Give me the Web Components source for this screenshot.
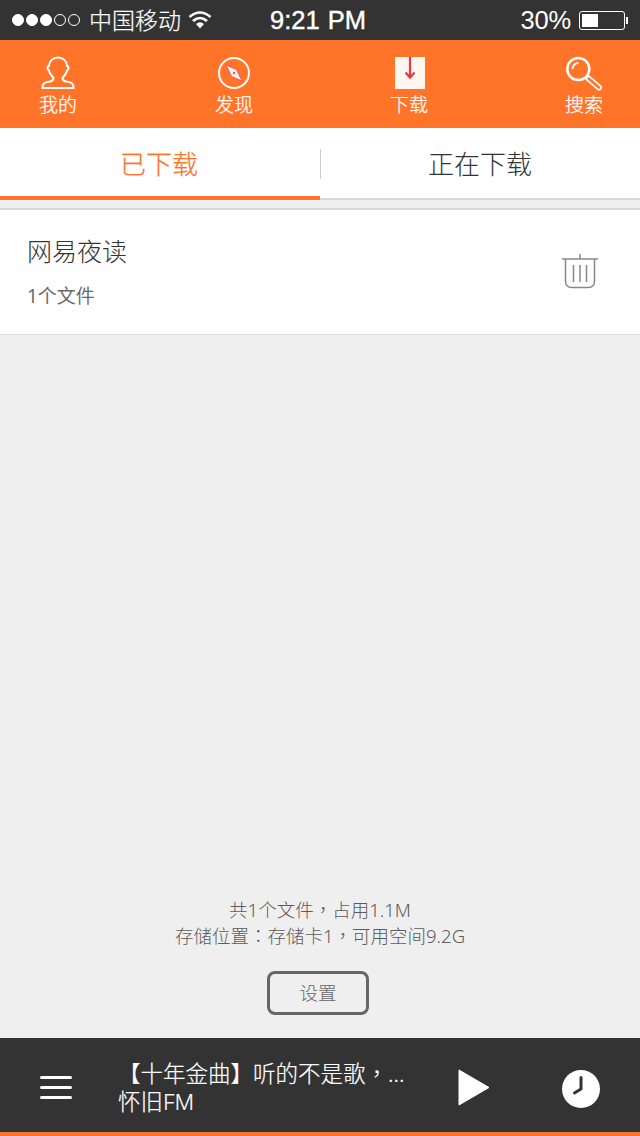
<!DOCTYPE html>
<html lang="zh-CN"><head><meta charset="utf-8"><title>下载</title>
<style>html,body{margin:0;padding:0;height:100%;background:#efefef}
body{font-family:"Noto Sans CJK SC","Noto Sans",sans-serif;overflow:hidden;font-weight:300}
app-shell{height:1136px}</style></head>
<body>
<template id="t-shell"><style>:host{display:flex;flex-direction:column;width:640px;height:1136px;background:#efefef}
.main{flex:1;min-height:0;display:flex;flex-direction:column}</style>
<status-bar></status-bar><top-nav></top-nav><tab-bar></tab-bar><download-item></download-item>
<div class="main"><storage-info></storage-info></div><player-bar></player-bar></template>

<template id="t-status"><style>:host{display:flex;align-items:center;height:40px;background:#333;color:#fff;padding:0 12px 0 12px;box-sizing:border-box;position:relative;font-family:"Liberation Sans",Arial,sans-serif;font-weight:400}
.dots{display:flex;gap:2px}.dots i{width:12px;height:12px;border-radius:50%;box-sizing:border-box;border:1px solid #fff}.dots i.f{background:#fff}
.car{font:300 23px/38px "Noto Sans CJK SC",sans-serif;margin-left:9px;align-self:flex-start;-webkit-text-stroke:.2px #fff}
svg.w{margin-left:7px}
.time{position:absolute;left:270px;top:0;font-size:25.5px;line-height:40px;-webkit-text-stroke:.4px #fff;word-spacing:1px}
.r{margin-left:auto;display:flex;align-items:center}.pct{font-size:25.5px;line-height:40px;margin-right:8px;letter-spacing:-.2px}
.bat{width:46px;height:19px;border:1px solid #fff;border-radius:3px;box-sizing:border-box;padding:2px;margin-right:0}.bat b{display:block;width:16px;height:13px;background:#fff}
.tip{width:2px;height:7px;background:#fff;margin-left:1px}</style>
<div class="dots"><i class="f"></i><i class="f"></i><i class="f"></i><i></i><i></i></div><span class="car">中国移动</span>
<svg class="w" width="24" height="20" viewBox="0 0 24 20"><path d="M1.500 7Q12-2 22.500 7M5 11Q12 5 19 11" fill="none" stroke="#fff" stroke-width="2.600"/><path d="M8 14Q12 10.500 16 14L12 18.500Z" fill="#fff"/></svg>
<span class="time">9:21 PM</span>
<div class="r"><span class="pct">30%</span><div class="bat"><b></b></div><div class="tip"></div></div></template>

<template id="t-nav"><style>:host{display:grid;grid-template-columns:repeat(4,1fr);height:88px;background:#ff7428;box-sizing:border-box}
.i{display:flex;flex-direction:column;align-items:center;color:#fff;font-size:19px;line-height:26px;padding-top:16px;box-sizing:border-box;height:88px;-webkit-text-stroke:.25px #fff}
.i svg{display:block;width:36px;height:34px;flex:none}.i span{display:block;margin-top:1px}
.a{transform:translateX(-22px)}.b{transform:translateX(-6px)}.c{transform:translateX(9px)}.d{transform:translateX(24px)}</style>
<div class="i a"><svg viewBox="0 0 36 34"><path d="M2.500 32H33.500C33.500 27 31 26 26 25.500C23.500 25 22.500 24 22.500 22C25 19 26.500 17 27 14.500C29 14 29 10 27 10C27 5 23 1.500 18 1.500C13 1.500 9 5 9 10C7 10 7 14 9 14.500C9.500 17 11 19 13.500 22C13.500 24 12.500 25 10 25.500C5 26 2.500 27 2.500 32Z" fill="none" stroke="#fff" stroke-width="2"/></svg><span>我的</span></div>
<div class="i b"><svg viewBox="0 0 36 34"><circle cx="18" cy="17" r="15" fill="none" stroke="#fff" stroke-width="2"/><path d="M10 9L20.500 13.500 26 25 15.500 20.500Z" fill="#fff3ef" stroke="#ee5560" stroke-width="1"/><circle cx="18" cy="17" r="1.200" fill="#ee5560"/></svg><span>发现</span></div>
<div class="i c"><svg viewBox="0 0 36 34"><rect x="4" y="1" width="30" height="32" fill="#fff6f2"/><path d="M19 1V21M14.500 16.500L19 21.500 23.500 16.500" fill="none" stroke="#e5383f" stroke-width="2.200"/></svg><span>下载</span></div>
<div class="i d"><svg viewBox="0 0 36 34" style="overflow:visible"><circle cx="12.300" cy="13" r="11" fill="none" stroke="#fff" stroke-width="2.500"/><path d="M6.500 13a6 6 0 0 1 6-6" fill="none" stroke="#fff" stroke-width="2"/><path d="M22.500 22.500L33 31.500" stroke="#fff" stroke-width="6" stroke-linecap="round"/><path d="M22.500 22.500L33 31.500" stroke="#ff7428" stroke-width="2.500" stroke-linecap="round"/></svg><span>搜索</span></div></template>

<template id="t-tabs"><style>:host{display:grid;grid-template-columns:1fr 1fr;height:72px;background:#fff;box-sizing:border-box;border-bottom:2px solid #d8d8d8}
.t{display:flex;align-items:center;justify-content:center;font-size:26px;color:#333;height:72px;box-sizing:border-box;padding-bottom:4px}
.on{color:#ff7428;border-bottom:4px solid #ff7428;padding-bottom:0;padding-right:2px;-webkit-text-stroke:.25px #ff7428}
.o{position:relative}.o::before{content:"";position:absolute;left:0;top:21px;width:1px;height:30px;background:#ccc}</style>
<div class="t on">已下载</div><div class="t o">正在下载</div></template>

<template id="t-item"><style>:host{display:flex;align-items:center;justify-content:space-between;margin-top:8px;border-top:2px solid #d8d8d8;border-bottom:1px solid #dcdcdc;background:#fff;height:127px;box-sizing:border-box;padding:0 41px 0 27px}
.n{font-size:25px;line-height:36px;color:#333}.s{font-size:19px;line-height:28px;color:#6a6a6a;margin-top:14px;font-family:"Noto Sans","Noto Sans CJK SC",sans-serif;font-weight:400}
.tx{margin-top:-2px}
svg{display:block;margin-top:-2px}</style>
<div class="tx"><div class="n">网易夜读</div><div class="s">1个文件</div></div>
<svg width="38" height="36" viewBox="0 0 38 36"><path d="M1 6H37M19 1V6M4.500 6V28Q4.500 34.500 11 34.500H27Q33.500 34.500 33.500 28V6M12.500 12V29M19 12V29M25.500 12V29" fill="none" stroke="#888" stroke-width="1.500"/></svg></template>

<template id="t-store"><style>:host{display:flex;flex-direction:column;align-items:center;margin-top:auto;padding-bottom:23px;color:#5c5c5c;font-size:18.500px;line-height:26px;font-family:"Noto Sans","Noto Sans CJK SC",sans-serif}
.b{margin-top:22px;width:102px;height:44px;border:3px solid #666;border-radius:8px;box-sizing:border-box;display:flex;align-items:center;justify-content:center;color:#666;transform:translateX(-2px)}
.z{font-family:"Noto Sans CJK TC",sans-serif}.l1{position:relative;top:1px}</style>
<div class="l1">共1个文件<span class="z" lang="zh-TW">，</span>占用1.1M</div><div>存储位置<span class="z" lang="zh-TW">：</span>存储卡1<span class="z" lang="zh-TW">，</span>可用空间9.2G</div><div class="b">设置</div></template>

<template id="t-player"><style>:host{display:flex;align-items:center;height:98px;background:#333;border-bottom:4px solid #ff7428;box-sizing:border-box;color:#fff;padding:0 39px 0 40px}
.m{width:32px;flex:none;margin-top:4px}.m i{display:block;height:3px;background:#fff;border-radius:2px;margin:7px 0}
.tx{width:300px;margin-left:46px;font-size:22.500px;line-height:28px;padding-top:3px;font-family:"Noto Sans","Noto Sans CJK SC",sans-serif;-webkit-text-stroke:.2px #fff}
.tx div{white-space:nowrap}.z{font-family:"Noto Sans CJK TC",sans-serif}
.p{margin-left:40px;display:block;flex:none;margin-top:4px}.c{margin-left:auto;display:block;flex:none;margin-top:8px}</style>
<div class="m"><i></i><i></i><i></i></div>
<div class="tx"><div>【十年金曲】听的不是歌<span class="z" lang="zh-TW">，</span>...</div><div>怀旧FM</div></div>
<svg class="p" width="32" height="37" viewBox="0 0 32 37"><path d="M1 1L31 18.500 1 36Z" fill="#fff" stroke="#fff" stroke-linejoin="round"/></svg>
<svg class="c" width="40" height="40" viewBox="0 0 40 40"><circle cx="20" cy="20" r="19" fill="#fff"/><path d="M20 8.500V20L13.500 24" fill="none" stroke="#333" stroke-width="3" stroke-linecap="round"/></svg></template>

<app-shell></app-shell>
<script>
const map={'app-shell':'t-shell','status-bar':'t-status','top-nav':'t-nav','tab-bar':'t-tabs','download-item':'t-item','storage-info':'t-store','player-bar':'t-player'};
for(const [n,id] of Object.entries(map)){customElements.define(n,class extends HTMLElement{constructor(){super();this.attachShadow({mode:'open'}).appendChild(document.getElementById(id).content.cloneNode(true));}});}
</script></body></html>
